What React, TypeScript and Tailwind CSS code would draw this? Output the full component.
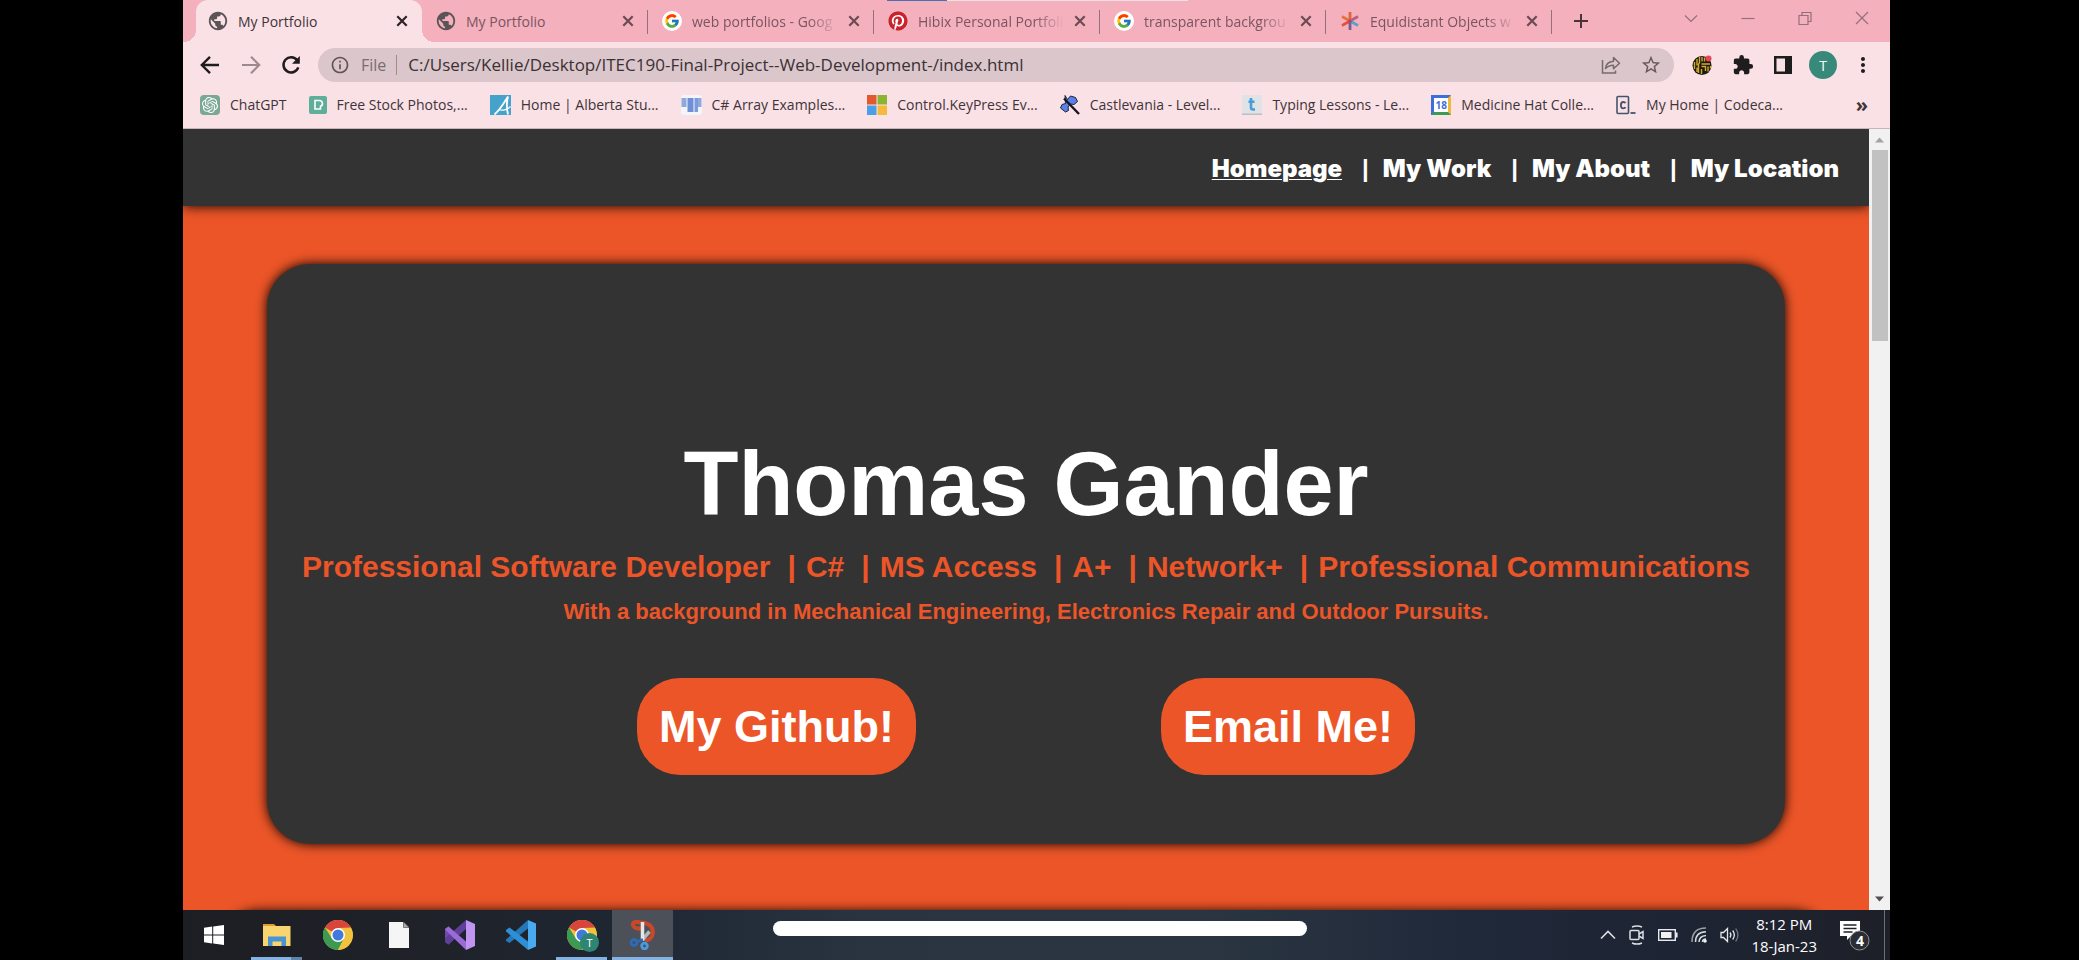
import type { ReactNode } from "react";
import { FcGoogle } from "react-icons/fc";
import { FaPinterest } from "react-icons/fa";
import { SiOpenai } from "react-icons/si";
import { MdAdd, MdExtension, MdInfoOutline, MdMoreVert, MdPublic, MdStarBorder } from "react-icons/md";

/* ---------- favicons ---------- */

const GoogleIcon = () => (
  <span className="flex size-5 items-center justify-center rounded-full bg-white">
    <FcGoogle className="size-4" />
  </span>
);

const PinterestIcon = () => (
  <span className="flex size-5 rounded-full bg-white">
    <FaPinterest className="size-5 text-[#c9232d]" />
  </span>
);

const AsteriskIcon = () => (
  <svg viewBox="0 0 18 18" className="size-[18px]" fill="none" strokeWidth="2.8">
    <path d="M9 9V0" stroke="#e0643c" />
    <path d="M9 9L1 4.6" stroke="#e8703a" />
    <path d="M9 9L17 4.6" stroke="#b8607c" />
    <path d="M9 9L1 13.4" stroke="#e0523c" />
    <path d="M9 9L17 13.4" stroke="#5aa0c8" />
    <path d="M9 9V18" stroke="#7a5a9c" />
    <circle cx="9" cy="9" r="1.6" fill="#c0405c" />
  </svg>
);

const PexelsIcon = () => (
  <svg viewBox="0 0 18 18" className="size-[18px]">
    <rect width="18" height="18" rx="2" fill="#5fae9a" />
    <path d="M6 4.5h4.2a3 3 0 0 1 1.3 5.8V13H6z" fill="none" stroke="#fff" strokeWidth="1.6" />
  </svg>
);

const AlbertaIcon = () => (
  <svg viewBox="0 0 21 20" className="h-5 w-[21px]">
    <rect width="21" height="20" fill="#45a3cb" />
    <path d="M4.500 19.500C10 15 14 8 18 1.500C16.500 7 16.500 13 18 19.500" fill="none" stroke="#fff" strokeWidth="1.800" />
    <path d="M9 14.500C12 16 17 15 20.500 11.500" fill="none" stroke="#fff" strokeWidth="1.200" />
  </svg>
);

const BarsIcon = () => (
  <svg viewBox="0 0 21 20" className="h-5 w-[21px]">
    <rect width="21" height="20" rx="3" fill="#f4f5fb" />
    <rect x="0.500" y="3" width="5" height="9" fill="#8fa8dd" />
    <rect x="6.500" y="3" width="6" height="14" fill="#6f8fd6" />
    <rect x="13.500" y="3" width="3.500" height="14" fill="#7d9ada" />
    <rect x="17" y="3" width="3.500" height="9" fill="#8fa8dd" />
  </svg>
);

const MicrosoftIcon = () => (
  <svg viewBox="0 0 20 20" className="size-5">
    <rect width="9.500" height="9.500" fill="#e25a2c" />
    <rect x="10.500" width="9.500" height="9.500" fill="#8ab530" />
    <rect y="10.500" width="9.500" height="9.500" fill="#4a9fe8" />
    <rect x="10.500" y="10.500" width="9.500" height="9.500" fill="#f5b93c" />
  </svg>
);

const AxeIcon = () => (
  <svg viewBox="0 0 20 20" className="size-5">
    <path d="M5 0.500l2.500 4 3-3.500 5 1.500 2 4-3.500 3-3.500-.500-2.500 3 .500 3.500-3 1.500L0.500 13l1.500-3.500 3.500-1z" fill="#5a80ea" stroke="#1d2233" strokeWidth="1" />
    <path d="M4 3.500L19 19" stroke="#14161f" strokeWidth="2.400" />
  </svg>
);

const TypingIcon = () => (
  <svg viewBox="0 0 20 20" className="size-5">
    <rect width="20" height="20" fill="#dfe3e6" />
    <rect y="18.500" width="20" height="1.500" fill="#bcc0c4" />
    <path d="M9 3v9.500q0 2 2 2h2M6.500 6.800h6" fill="none" stroke="#4a9cd6" strokeWidth="2.600" />
  </svg>
);

const CalendarIcon = () => (
  <span className="flex size-5 items-center justify-center border-3 border-t-[#3d6fd8] border-r-[#f0b93a] border-b-[#3d9a55] border-l-[#3d6fd8] bg-white text-[10px] leading-none font-bold text-[#3d6fd8]">
    18
  </span>
);

const CodecademyIcon = () => (
  <svg viewBox="0 0 20 20" className="size-5" fill="none" stroke="#44546a">
    <rect x="1" y="1.500" width="11.500" height="17" rx="1" strokeWidth="1.600" />
    <path d="M9.500 8.200Q8.900 7 7.300 7 4.900 7 4.900 10.200t2.400 3.200q1.600 0 2.200-1.300" strokeWidth="1.800" />
    <path d="M14.500 18h5" strokeWidth="1.800" />
  </svg>
);

/* ---------- toolbar icons ---------- */

const CloseIcon = () => (
  <svg viewBox="0 0 12 12" className="size-3" fill="none" stroke="currentColor" strokeWidth="2.2">
    <path d="M1.300 1.300l9.400 9.400M10.700 1.300l-9.400 9.400" />
  </svg>
);

const BackIcon = () => (
  <svg viewBox="0 0 20 20" className="size-5" fill="none" stroke="currentColor" strokeWidth="2.4">
    <path d="M10 1.800L1.800 10l8.200 8.200M2 10h17" />
  </svg>
);

const ForwardIcon = () => (
  <svg viewBox="0 0 20 20" className="size-5" fill="none" stroke="currentColor" strokeWidth="2.2">
    <path d="M10 1.800l8.200 8.200-8.200 8.200M18 10H1" />
  </svg>
);

const ReloadIcon = () => (
  <svg viewBox="0 0 20 20" className="size-5">
    <path d="M16.200 5.300A7.600 7.600 0 1 0 17.300 12.300" fill="none" stroke="currentColor" strokeWidth="2.500" />
    <path d="M18.800 1v7.800H11z" fill="currentColor" />
  </svg>
);

const ShareIcon = () => (
  <svg viewBox="0 0 20 20" className="size-5" fill="none" stroke="#77696e" strokeWidth="1.500">
    <path d="M1.500 5v13h13v-2.500" />
    <path d="M4.500 13.500q.5-6.500 8-7.200V2.500l6 5.700-6 5.500v-3.500q-5 0-8 3.300z" strokeLinejoin="round" />
  </svg>
);

const MazeIcon = () => (
  <svg viewBox="0 0 20 20" className="size-5" fill="none">
    <circle cx="10" cy="10.500" r="9.500" fill="#1d1a12" />
    <path
      d="M2.500 7v7M5 4v6.500M5 12.500v4.500M7.500 2v5.500l-1 2V18M10 2v4.500M12.500 2.500v4M9.500 9h8.500M9.500 11.500h4V16M9.500 14v5M16 11.500v5M18.500 11v2.500"
      stroke="#d0aa2e"
      strokeWidth="1.400"
    />
    <circle cx="16.500" cy="3.500" r="3" fill="#e8455a" />
  </svg>
);

const SidePanelIcon = () => (
  <svg viewBox="0 0 18 18" className="size-[18px]">
    <rect width="18" height="18" fill="#1f1c1e" />
    <rect x="2.500" y="2.500" width="8.500" height="13" fill="#fae1e6" />
  </svg>
);

/* ---------- taskbar icons ---------- */

const StartIcon = () => (
  <svg viewBox="0 0 20 20" className="size-5" fill="#fff">
    <path d="M0 2.800L8.200 1.600V9.500H0zM9.200 1.500L20 0V9.500H9.200zM0 10.500H8.200V18.400L0 17.200zM9.200 10.500H20V20L9.200 18.500z" />
  </svg>
);

const ExplorerIcon = () => (
  <svg viewBox="0 0 28 24" className="h-6 w-7">
    <path d="M0 1h11l2 2v3H0z" fill="#dd9c2e" />
    <rect y="3" width="27.500" height="20" fill="#f8d56e" />
    <path d="M5 23V13.500h18V23h-4.500v-4.500h-9V23z" fill="#4a94d2" />
  </svg>
);

const ChromeIcon = () => (
  <svg viewBox="0 0 30 30" className="size-[30px]">
    <circle cx="15" cy="15" r="15" fill="#f2c23e" />
    <path d="M15 15L2 7.500A15 15 0 0 1 28 7.500L15 8z" fill="#d8453a" />
    <path d="M2 7.500A15 15 0 0 0 15 30L21 18.500 15 15 8.900 18.500z" fill="#3d9a52" />
    <path d="M15 8H28A15 15 0 0 1 15 30L21.100 18.500z" fill="#f2c23e" />
    <circle cx="15" cy="15" r="7" fill="#fff" />
    <circle cx="15" cy="15" r="5.500" fill="#4279dc" />
  </svg>
);

const FileIcon = () => (
  <svg viewBox="0 0 20 26" className="h-[26px] w-5">
    <path d="M0 0h14.500L20 5.500V26H0z" fill="#f5f5f5" />
    <path d="M14.500 0L20 5.500h-5.500z" fill="#aaa" stroke="#444" strokeWidth=".6" />
  </svg>
);

const VisualStudioIcon = () => (
  <svg viewBox="0 0 30 30" className="size-[30px]">
    <path d="M0 8.500L3.500 6.500 8 11v9l-4.500 4.500L0 22z" fill="#6f4ba8" />
    <path d="M3.500 24.500L21 9V0L0 18.500V22z" fill="#5f3f97" />
    <path d="M3.500 6.500L21 21.500V30L0 9.500z" fill="#9a6bd8" />
    <path d="M21 0l9 4v22l-9 4z" fill="#c094f0" />
  </svg>
);

const VsCodeIcon = () => (
  <svg viewBox="0 0 30 30" className="size-[30px]">
    <path d="M0 19.500L22 0v8.500L3.500 23 0 21z" fill="#2477b8" />
    <path d="M0 10L3.500 7.500 22 21.500V30L0 11.500z" fill="#2f8fd4" />
    <path d="M22 0l8 3.500v23L22 30z" fill="#4aaaf0" />
  </svg>
);

const SnipIcon = () => (
  <svg viewBox="0 0 28 30" className="h-[30px] w-7" fill="none">
    <path d="M13 3Q3 0 4 5.500q3 4.500 9 2.500M13 2.500Q24 4 24 12.500 23 20 16 20.500" stroke="#c9482a" strokeWidth="4" />
    <path d="M20.500 11.500l-7 8" stroke="#b4b8bc" strokeWidth="3.500" />
    <path d="M13.500 2v19" stroke="#e4e6e8" strokeWidth="3.500" />
    <circle cx="5" cy="22.500" r="3" stroke="#2b6cb8" strokeWidth="2.800" />
    <circle cx="15.500" cy="26" r="2.800" stroke="#4a9ade" strokeWidth="2.800" />
    <path d="M8 21.500l6-2" stroke="#2b6cb8" strokeWidth="2.600" />
  </svg>
);

const ChevronUpIcon = () => (
  <svg viewBox="0 0 16 10" className="h-[10px] w-4" fill="none" stroke="#dcdfe3" strokeWidth="1.600">
    <path d="M1 8.500L8 1.500l7 7" />
  </svg>
);

const MeetIcon = () => (
  <svg viewBox="0 0 16 20" className="h-5 w-4" fill="none" stroke="#dcdfe3" strokeWidth="1.500">
    <path d="M3 2q5-2.200 10 0M3 18q5 2.200 10 0" />
    <rect x="1" y="5.500" width="9" height="9" rx="1" />
    <path d="M10 9l4-2.500v7L10 11" />
  </svg>
);

const BatteryIcon = () => (
  <svg viewBox="0 0 20 12" className="h-3 w-5" fill="none" stroke="#e6e8ea">
    <rect x=".7" y=".7" width="16.600" height="10.600" strokeWidth="1.400" />
    <rect x="3" y="3" width="10.500" height="6" fill="#f2f2f2" stroke="none" />
    <path d="M18.800 3.500v5" strokeWidth="1.600" />
  </svg>
);

const WifiIcon = () => (
  <svg viewBox="0 0 16 16" className="size-4" fill="none" strokeWidth="1.500">
    <path d="M1 15Q1 1 15 1" stroke="#9aa0a8" />
    <path d="M4.500 15Q4.500 5 15 4.800M8 15Q8.200 9 15 8.500" stroke="#d6d9dd" />
    <path d="M11.500 15q0-3 3.500-3" stroke="#d6d9dd" />
    <circle cx="14" cy="14" r="1.800" fill="#f2f2f2" />
  </svg>
);

const SoundIcon = () => (
  <svg viewBox="0 0 20 16" className="h-4 w-5" fill="none" stroke="#e6e8ea" strokeWidth="1.300">
    <path d="M1 5.500h2.500L7.500 1.500v13L3.500 10.500H1z" />
    <path d="M10 5.500q1.800 2.500 0 5M12.700 3.500q3.300 4.500 0 9" />
    <path d="M15.700 1.500q4.500 6.500 0 13" stroke="#747a84" />
  </svg>
);

/* ---------- data ---------- */

const globe = <MdPublic className="size-[22px] shrink-0 text-[#5b5356]" />;

const tabs: { title: string; icon: ReactNode }[] = [
  { title: "My Portfolio", icon: globe },
  { title: "My Portfolio", icon: globe },
  { title: "web portfolios - Goog", icon: <GoogleIcon /> },
  { title: "Hibix Personal Portfoli", icon: <PinterestIcon /> },
  { title: "transparent backgrou", icon: <GoogleIcon /> },
  { title: "Equidistant Objects w", icon: <AsteriskIcon /> },
];

const bookmarks: { title: string; icon: ReactNode }[] = [
  {
    title: "ChatGPT",
    icon: (
      <span className="flex size-5 items-center justify-center rounded-sm bg-[#7ba795]">
        <SiOpenai className="size-4 text-white" />
      </span>
    ),
  },
  { title: "Free Stock Photos,...", icon: <PexelsIcon /> },
  { title: "Home | Alberta Stu...", icon: <AlbertaIcon /> },
  { title: "C# Array Examples...", icon: <BarsIcon /> },
  { title: "Control.KeyPress Ev...", icon: <MicrosoftIcon /> },
  { title: "Castlevania - Level...", icon: <AxeIcon /> },
  { title: "Typing Lessons - Le...", icon: <TypingIcon /> },
  { title: "Medicine Hat Colle...", icon: <CalendarIcon /> },
  { title: "My Home | Codeca...", icon: <CodecademyIcon /> },
];

const navLinks = ["Homepage", "My Work", "My About", "My Location"];

const skills = ["Professional Software Developer", "C#", "MS Access", "A+", "Network+", "Professional Communications"];

/* ---------- browser chrome ---------- */

function TabStrip() {
  return (
    <div className="relative flex h-[42px] items-stretch bg-[#f4b0bd] pl-[13px]">
      <div className="absolute top-0 left-[704px] flex h-px w-[301px]">
        <span className="w-[60px] bg-[#4a6fb5]" />
        <span className="flex-1 bg-[#f0dfe4]" />
      </div>
      {tabs.map((tab, i) => (
        <div
          key={i}
          className={
            i === 0
              ? "relative flex max-w-[226px] min-w-0 flex-1 items-center rounded-t-xl bg-[#fae1e6] pr-[10px] pl-3 text-[#3f3438]"
              : "relative flex max-w-[226px] min-w-0 flex-1 items-center pr-[10px] pl-[14px] text-[#7a5560]"
          }
        >
          {i === 0 && (
            <>
              <span className="absolute bottom-0 -left-3 size-3 bg-[radial-gradient(circle_at_0_0,#f4b0bd_12px,#fae1e6_12px)]" />
              <span className="absolute -right-3 bottom-0 size-3 bg-[radial-gradient(circle_at_100%_0,#f4b0bd_12px,#fae1e6_12px)]" />
            </>
          )}
          <button className="flex min-w-0 flex-1 items-center gap-[10px] text-left">
            <span className="flex w-5 shrink-0 justify-center">{tab.icon}</span>
            <span
              className={
                i < 2
                  ? "min-w-0 flex-1 whitespace-nowrap"
                  : "min-w-0 flex-1 whitespace-nowrap [mask-image:linear-gradient(to_right,#000_80%,transparent)]"
              }
            >
              {tab.title}
            </span>
          </button>
          <button
            aria-label="Close tab"
            className={
              i === 0
                ? "ml-[6px] flex size-5 shrink-0 items-center justify-center text-[#2b2326]"
                : "ml-[6px] flex size-5 shrink-0 items-center justify-center text-[#6b4a54]"
            }
          >
            <CloseIcon />
          </button>
          {i > 0 && <span className="absolute top-[10px] right-0 h-6 w-px bg-[#94707a]" />}
        </div>
      ))}
      <button aria-label="New tab" className="ml-[15px] flex w-7 items-center justify-center">
        <MdAdd className="size-6 text-[#4a3339]" />
      </button>
      <div className="ml-auto flex h-9 text-[#94707a]">
        {[
          ["Search tabs", "M1 4.500l6 6 6-6"],
          ["Minimize", "M0.500 7.500h13"],
          ["Restore", "M1 4.500h9v9h-9zM4 4.500v-3h9v9h-3"],
          ["Close", "M1 1l12 12M13 1l-12 12"],
        ].map(([label, d]) => (
          <button key={label} aria-label={label} className="flex w-[57px] items-center justify-center">
            <svg viewBox="0 0 14 14" className="size-[14px]" fill="none" stroke="currentColor" strokeWidth="1.200">
              <path d={d} />
            </svg>
          </button>
        ))}
      </div>
    </div>
  );
}

function Toolbar() {
  return (
    <div className="flex h-[46px] items-center pr-[15px] pl-[13px] text-[#1f1c1e]">
      <button aria-label="Back" className="flex w-[27px] justify-center">
        <BackIcon />
      </button>
      <button aria-label="Forward" className="ml-[14px] flex w-[27px] justify-center text-[#9d8a90]">
        <ForwardIcon />
      </button>
      <button aria-label="Reload" className="ml-[13px] flex w-[27px] justify-center">
        <ReloadIcon />
      </button>
      <div className="ml-[14px] flex h-[34px] min-w-0 flex-1 items-center rounded-full bg-[#dac6cb] pr-3 pl-[12px]">
        <MdInfoOutline className="size-5 shrink-0 text-[#5f5357]" />
        <span className="ml-[11px] text-[16px] text-[#7a6c71]">File</span>
        <span className="mr-[11px] ml-[10px] h-5 w-px bg-[#9d8c92]" />
        <input
          aria-label="Address"
          readOnly
          value="C:/Users/Kellie/Desktop/ITEC190-Final-Project--Web-Development-/index.html"
          className="min-w-0 flex-1 bg-transparent text-[17px] text-[#3a3135] outline-none"
        />
        <button aria-label="Share">
          <ShareIcon />
        </button>
        <button aria-label="Bookmark" className="ml-[19px]">
          <MdStarBorder className="size-[22px] text-[#66595e]" />
        </button>
      </div>
      <div className="ml-[18px] flex items-center gap-[20px]">
        <button aria-label="Maze extension">
          <MazeIcon />
        </button>
        <button aria-label="Extensions">
          <MdExtension className="size-[22px]" />
        </button>
        <button aria-label="Side panel">
          <SidePanelIcon />
        </button>
      </div>
      <button className="ml-[17px] flex size-7 items-center justify-center rounded-full bg-[#37897a] text-[14px] text-white">
        T
      </button>
      <button aria-label="Menu" className="ml-[14px]">
        <MdMoreVert className="size-6" />
      </button>
    </div>
  );
}

function Bookmarks() {
  return (
    <div className="flex h-[41px] items-center border-b border-[#c8b4ba] pr-[22px] pb-[7px] pl-[17px] text-[14px] text-[#3f3438]">
      <div className="flex min-w-0 flex-1 gap-[22px] overflow-hidden">
        {bookmarks.map((b) => (
          <a key={b.title} href="#" className="flex shrink-0 items-center gap-[10px] whitespace-nowrap">
            {b.icon}
            {b.title}
          </a>
        ))}
      </div>
      <button aria-label="More bookmarks" className="text-[20px] leading-none font-bold">
        »
      </button>
    </div>
  );
}

/* ---------- portfolio page ---------- */

function PortfolioPage() {
  return (
    <div className="min-w-0 flex-1 overflow-hidden bg-[#ec5528] font-['Liberation_Sans',Arial,sans-serif] font-bold">
      <header className="flex h-[77px] items-center justify-end bg-[#333] pt-[2px] pr-[30px] shadow-[0_0_12px_#000]">
        <nav className="flex items-center text-white">
          {navLinks.map((label, i) => (
            <span key={label} className="flex items-center">
              {i > 0 && <span className="mr-[14px] ml-[20px] text-[24px]">|</span>}
              <a
                href="#"
                className={
                  i === 0
                    ? "font-[Inter,'Liberation_Sans',sans-serif] text-[24px] font-black underline decoration-1 underline-offset-2"
                    : "font-[Inter,'Liberation_Sans',sans-serif] text-[24px] font-black"
                }
              >
                {label}
              </a>
            </span>
          ))}
        </nav>
      </header>

      <section className="mx-auto mt-[58px] flex w-[90%] flex-col items-center rounded-[43px] bg-[#333] pt-[168px] pb-[69px] text-[#ec5528] shadow-[0_0_12px_#000]">
        <h1 className="text-[90px] leading-[104px] text-white">Thomas Gander</h1>
        <h2 className="mt-[14px] flex text-[30px] leading-[34px]">
          {skills.map((skill, i) => (
            <span key={skill} className="flex">
              {i > 0 && <span className="mr-[10px] ml-[17px]">|</span>}
              {skill}
            </span>
          ))}
        </h2>
        <h3 className="mt-[15px] text-[22px] leading-[26px]">
          With a background in Mechanical Engineering, Electronics Repair and Outdoor Pursuits.
        </h3>
        <div className="mt-[53px] flex gap-[245px] text-[45px] leading-[97px] text-white">
          <a href="#" className="rounded-[43px] bg-[#ec5528] px-[22px]">
            My Github!
          </a>
          <a href="#" className="rounded-[43px] bg-[#ec5528] px-[22px]">
            Email Me!
          </a>
        </div>
      </section>

      <section className="mx-auto mt-[67px] h-40 w-[96%] rounded-[43px] bg-[#333] shadow-[0_0_12px_#000]" />
    </div>
  );
}

function Scrollbar() {
  return (
    <div className="flex w-[21px] shrink-0 flex-col items-center bg-[#f1f1f1]">
      <svg viewBox="0 0 21 21" className="size-[21px] shrink-0">
        <path d="M6 13.500L10.500 8.500l4.500 5z" fill="#a3a3a3" />
      </svg>
      <div className="h-[191px] w-4 bg-[#c1c1c1]" />
      <svg viewBox="0 0 21 21" className="mt-auto size-[21px] shrink-0">
        <path d="M6 7.500l4.500 5 4.500-5z" fill="#505050" />
      </svg>
    </div>
  );
}

/* ---------- taskbar ---------- */

function TaskButton({ label, active, open, children }: { label: string; active?: boolean; open?: boolean; children: ReactNode }) {
  return (
    <button
      aria-label={label}
      className={
        active
          ? "relative flex w-[61px] items-center justify-center bg-[#4b5059]"
          : "relative flex w-[61px] items-center justify-center"
      }
    >
      {children}
      {open && <span className="absolute inset-x-[5px] bottom-0 h-[3px] bg-[#84b3e3]" />}
      {active && <span className="absolute inset-x-0 bottom-0 h-[3px] bg-[#84b3e3]" />}
    </button>
  );
}

function Taskbar() {
  return (
    <div className="flex h-[50px] shrink-0 bg-[linear-gradient(to_right,#1c1e23,#1f2229_15%,#1e2733_27%,#2a3441_40%,#2a3541_60%,#20293a_75%,#1d2433_88%,#1e2028)] text-white">
      <TaskButton label="Start">
        <StartIcon />
      </TaskButton>
      <div className="ml-[2px] flex">
        <TaskButton label="File Explorer" open>
          <ExplorerIcon />
          <span className="absolute right-[5px] bottom-0 z-10 h-[3px] w-[11px] bg-[#5f84a8]" />
        </TaskButton>
        <TaskButton label="Chrome">
          <ChromeIcon />
        </TaskButton>
        <TaskButton label="Document">
          <FileIcon />
        </TaskButton>
        <TaskButton label="Visual Studio">
          <VisualStudioIcon />
        </TaskButton>
        <TaskButton label="Visual Studio Code">
          <VsCodeIcon />
        </TaskButton>
        <TaskButton label="Chrome profile T" open>
          <ChromeIcon />
          <span className="absolute right-[13px] bottom-[8px] flex size-[19px] items-center justify-center rounded-full bg-[#2f8574] text-[11px] leading-none">
            T
          </span>
        </TaskButton>
        <TaskButton label="Snipping Tool" active>
          <SnipIcon />
        </TaskButton>
      </div>
      <div className="mt-[11px] ml-[100px] h-[15px] w-[534px] rounded-full bg-white" />
      <div className="ml-auto flex items-center">
        <div className="flex items-center gap-[13px]">
          <ChevronUpIcon />
          <MeetIcon />
          <BatteryIcon />
          <WifiIcon />
          <SoundIcon />
        </div>
        <div className="ml-[11px] text-center text-[15px] leading-[22px]">
          <div>8:12 PM</div>
          <div>18-Jan-23</div>
        </div>
        <button aria-label="Notifications" className="relative ml-[22px] w-[31px]">
          <svg viewBox="0 0 31 31" className="size-[31px]">
            <path d="M1 1h20v15H12l-4 4v-4H1z" fill="#fff" />
            <path d="M4.500 5h13M4.500 8.500h13M4.500 12h9" stroke="#1e2028" strokeWidth="1.300" />
            <circle cx="20.500" cy="20.500" r="9.500" fill="#2b2e34" stroke="#8c9096" strokeWidth="1" />
          </svg>
          <span className="absolute top-[13px] left-[11px] w-5 text-center text-[14px] leading-4 font-bold">4</span>
        </button>
        <span className="mr-[5px] ml-[14px] h-[50px] w-px bg-[#6b7078]" />
      </div>
    </div>
  );
}

export default function App() {
  return (
    <div className="flex h-screen flex-col overflow-hidden bg-black pr-[189px] pl-[183px] font-['Open_Sans','Noto_Sans',sans-serif] text-[14px]">
      <div className="shrink-0 bg-[#fae1e6]">
        <TabStrip />
        <Toolbar />
        <Bookmarks />
      </div>
      <main className="flex min-h-0 flex-1">
        <PortfolioPage />
        <Scrollbar />
      </main>
      <Taskbar />
    </div>
  );
}
